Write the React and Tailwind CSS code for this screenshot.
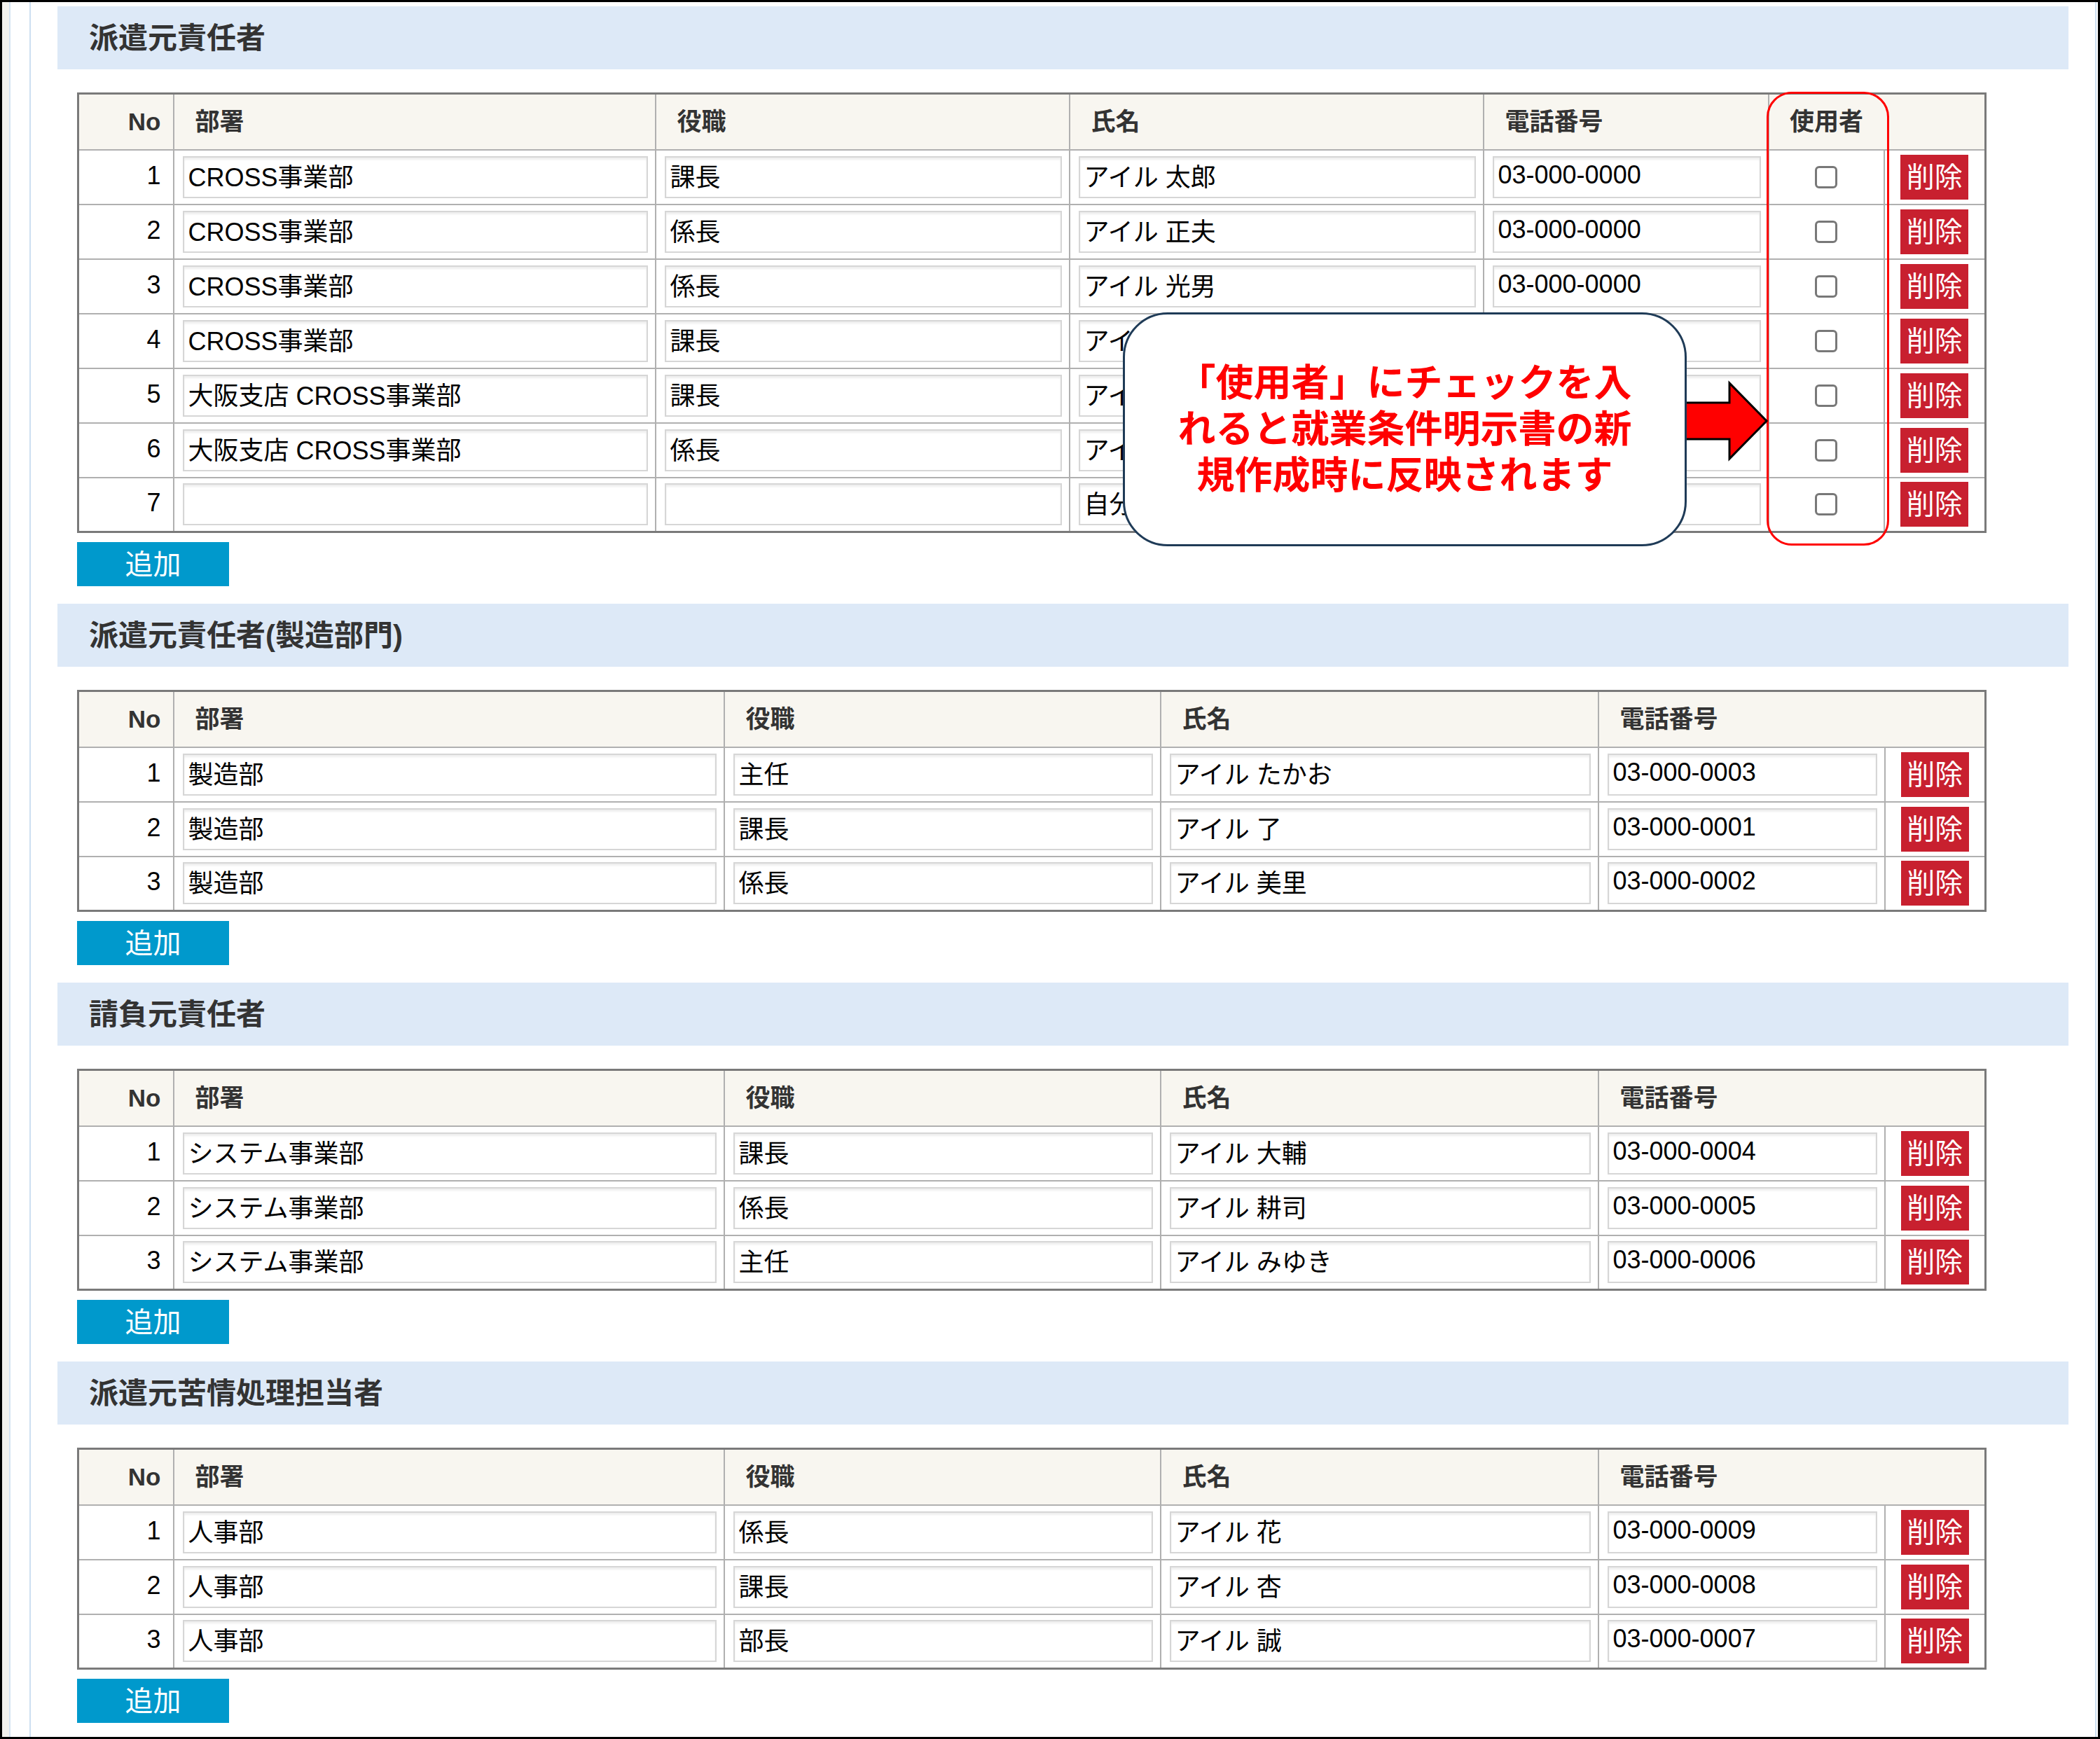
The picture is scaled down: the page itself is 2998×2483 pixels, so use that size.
import React from 'react'

const SECTIONS = [
  {
    title: '派遣元責任者',
    withUser: true,
    rows: [
      ['CROSS事業部', '課長', 'アイル 太郎', '03-000-0000'],
      ['CROSS事業部', '係長', 'アイル 正夫', '03-000-0000'],
      ['CROSS事業部', '係長', 'アイル 光男', '03-000-0000'],
      ['CROSS事業部', '課長', 'アイル 一郎', '03-000-0000'],
      ['大阪支店 CROSS事業部', '課長', 'アイル 次郎', '06-000-0000'],
      ['大阪支店 CROSS事業部', '係長', 'アイル 三郎', '06-000-0000'],
      ['', '', '自分', ''],
    ],
  },
  {
    title: '派遣元責任者(製造部門)',
    rows: [
      ['製造部', '主任', 'アイル たかお', '03-000-0003'],
      ['製造部', '課長', 'アイル 了', '03-000-0001'],
      ['製造部', '係長', 'アイル 美里', '03-000-0002'],
    ],
  },
  {
    title: '請負元責任者',
    rows: [
      ['システム事業部', '課長', 'アイル 大輔', '03-000-0004'],
      ['システム事業部', '係長', 'アイル 耕司', '03-000-0005'],
      ['システム事業部', '主任', 'アイル みゆき', '03-000-0006'],
    ],
  },
  {
    title: '派遣元苦情処理担当者',
    rows: [
      ['人事部', '係長', 'アイル 花', '03-000-0009'],
      ['人事部', '課長', 'アイル 杏', '03-000-0008'],
      ['人事部', '部長', 'アイル 誠', '03-000-0007'],
    ],
  },
]

const COLS_USER = ['w-[136px]', 'w-[688px]', 'w-[591px]', 'w-[591px]', 'w-[407px]', 'w-[165px]', 'w-[145px]']
const COLS = ['w-[136px]', 'w-[786px]', 'w-[623px]', 'w-[625px]', 'w-[409px]', 'w-[144px]']

const th = 'h-[80px] border-2 border-[#b0b0b0] bg-[#f8f6f0] text-left pl-[30px] text-[35px] font-bold text-[#333]'
const td = 'h-[78px] border-2 border-[#b0b0b0] pl-[12px] pr-[10px]'

function Field({ value }) {
  return (
    <input
      defaultValue={value}
      className="block h-[60px] w-full border-2 border-[#d6d6d6] bg-white px-[6px] pb-[6px] text-[36px] text-black shadow-[inset_0_3px_3px_rgba(0,0,0,0.07)] outline-none"
    />
  )
}

function Table({ rows, withUser }) {
  const cols = withUser ? COLS_USER : COLS
  return (
    <table className="ml-[28px] mt-[33px] w-[2723px] table-fixed border-collapse border-[3px] border-[#7a7a7a]">
      <colgroup>
        {cols.map((c, i) => (
          <col key={i} className={c} />
        ))}
      </colgroup>
      <thead>
        <tr>
          <th className="h-[80px] border-2 border-[#b0b0b0] bg-[#f8f6f0] pr-[17px] text-right text-[35px] font-bold text-[#333]">No</th>
          <th className={th}>部署</th>
          <th className={th}>役職</th>
          <th className={th}>氏名</th>
          {withUser ? (
            <>
              <th className={th}>電話番号</th>
              <th className="h-[80px] border-2 border-r-0 border-[#b0b0b0] bg-[#f8f6f0] text-center text-[35px] font-bold text-[#333]">使用者</th>
            </>
          ) : (
            <th className="h-[80px] border-2 border-r-0 border-[#b0b0b0] bg-[#f8f6f0] pl-[30px] text-left text-[35px] font-bold text-[#333]">電話番号</th>
          )}
          <th className="h-[80px] border-2 border-l-0 border-[#b0b0b0] bg-[#f8f6f0]"></th>
        </tr>
      </thead>
      <tbody>
        {rows.map((r, i) => (
          <tr key={i}>
            <td className="h-[78px] border-2 border-[#b0b0b0] pb-[4px] pr-[17px] text-right text-[36px] text-black">{i + 1}</td>
            {r.map((v, j) => (
              <td key={j} className={td}>
                <Field value={v} />
              </td>
            ))}
            {withUser && (
              <td className="h-[78px] border-2 border-[#b0b0b0] text-center">
                <input
                  type="checkbox"
                  className="inline-block h-[32px] w-[32px] appearance-none rounded-[6px] border-[3px] border-[#787878] bg-white align-middle"
                />
              </td>
            )}
            <td className="h-[78px] border-2 border-[#b0b0b0] text-center">
              <button className="inline-flex h-[64px] w-[97px] items-center justify-center bg-[#c8202f] text-[40px] leading-none text-white">
                削除
              </button>
            </td>
          </tr>
        ))}
      </tbody>
    </table>
  )
}

function Section({ title, rows, withUser }) {
  return (
    <section className="mb-[25px]">
      <h2 className="flex h-[90px] items-center bg-[#dde9f7] pl-[45px] text-[42px] font-bold text-[#333]">{title}</h2>
      <Table rows={rows} withUser={withUser} />
      <button className="ml-[28px] mt-[13px] flex h-[63px] w-[217px] items-center justify-center bg-[#0099cc] text-[40px] leading-none text-white">
        追加
      </button>
    </section>
  )
}

export default function App() {
  return (
    <div className="relative flex h-[2483px] w-[2998px] overflow-hidden border-[3px] border-black bg-white font-['Liberation_Sans','Noto_Sans_CJK_JP',sans-serif]">
      <div className="w-[10px] bg-[#f2f1ed]" />
      <div className="w-[29px] border-l-2 border-[#d5e3f2]" />
      <main className="flex-1 border-x-2 border-[#cddff1] px-[38px] pt-[6px]">
        {SECTIONS.map((s) => (
          <Section key={s.title} {...s} />
        ))}
      </main>
      <div className="w-[2px]" />

      {/* 使用者 column highlight */}
      <div className="absolute left-[2519px] top-[128px] h-[648px] w-[175px] rounded-[36px] border-[3px] border-[#ff0000]" />

      <svg className="absolute left-[2395px] top-[540px]" width="128" height="116" viewBox="0 0 128 116">
        <polygon
          points="0,32 71,32 71,4 124,58 71,112 71,84 0,84"
          fill="#ff0000"
          stroke="#000"
          strokeWidth="3"
          strokeLinejoin="miter"
        />
      </svg>

      <div className="absolute left-[1600px] top-[443px] flex h-[334px] w-[805px] items-center justify-center rounded-[64px] border-[3px] border-[#1f3b57] bg-white">
        <p className="text-center text-[54px] font-bold leading-[66px] text-[#ff0000]">
          「使用者」にチェックを入
          <br />
          れると就業条件明示書の新
          <br />
          規作成時に反映されます
        </p>
      </div>
    </div>
  )
}
